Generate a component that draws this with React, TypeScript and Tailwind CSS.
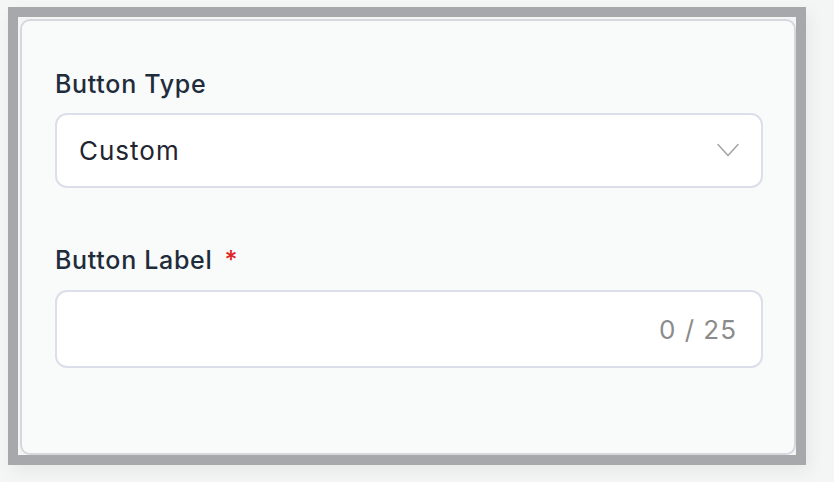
import React from "react";

export default function App() {
  return (
    <div
      className="w-[834px] h-[482px] bg-[#f4f5f5] pt-[7px] pl-[8px]"
      style={{ fontFamily: "Inter, 'Noto Sans', sans-serif" }}
    >
      <div className="w-[798px] h-[458px] border-[10px] border-[#a7a8ab] shadow-[4px_6px_16px_rgba(0,0,0,0.06)] pt-[2px] pl-[2px] overflow-hidden">
        <div className="w-full h-full rounded-[10px] border-2 border-[#d5d9de] bg-[#f9fafa] pl-[33px] pr-[31px] pt-[47px]">
          <div className="text-[25px] leading-[32px] tracking-[0.7px] text-[#1f2c3b] font-medium mb-[13px]">
            Button Type
          </div>
          <div className="h-[75px] rounded-[12px] border-2 border-[#dcdeea] bg-white flex items-center justify-between pl-[22px] pr-[21px]">
            <span className="text-[26px] tracking-[1px] text-[#1f2430]">Custom</span>
            <svg width="24" height="15" viewBox="0 0 24 15" fill="none">
              <path d="M2 1.5 L12 12.5 L22 1.5" stroke="#a6a6a6" strokeWidth="1.6" strokeLinecap="round" strokeLinejoin="round" />
            </svg>
          </div>
          <div className="mt-[56px] text-[25px] leading-[32px] tracking-[0.7px] text-[#1f2c3b] font-medium mb-[14px] flex items-center">
            <span>Button Label</span>
            <span className="text-[#e02424] ml-[12px]">*</span>
          </div>
          <div className="h-[78px] rounded-[12px] border-2 border-[#dcdeea] bg-white flex items-center justify-end pr-[24px]">
            <span className="text-[26px] tracking-[1px] text-[#8b8b8b]">0 / 25</span>
          </div>
        </div>
      </div>
    </div>
  );
}
